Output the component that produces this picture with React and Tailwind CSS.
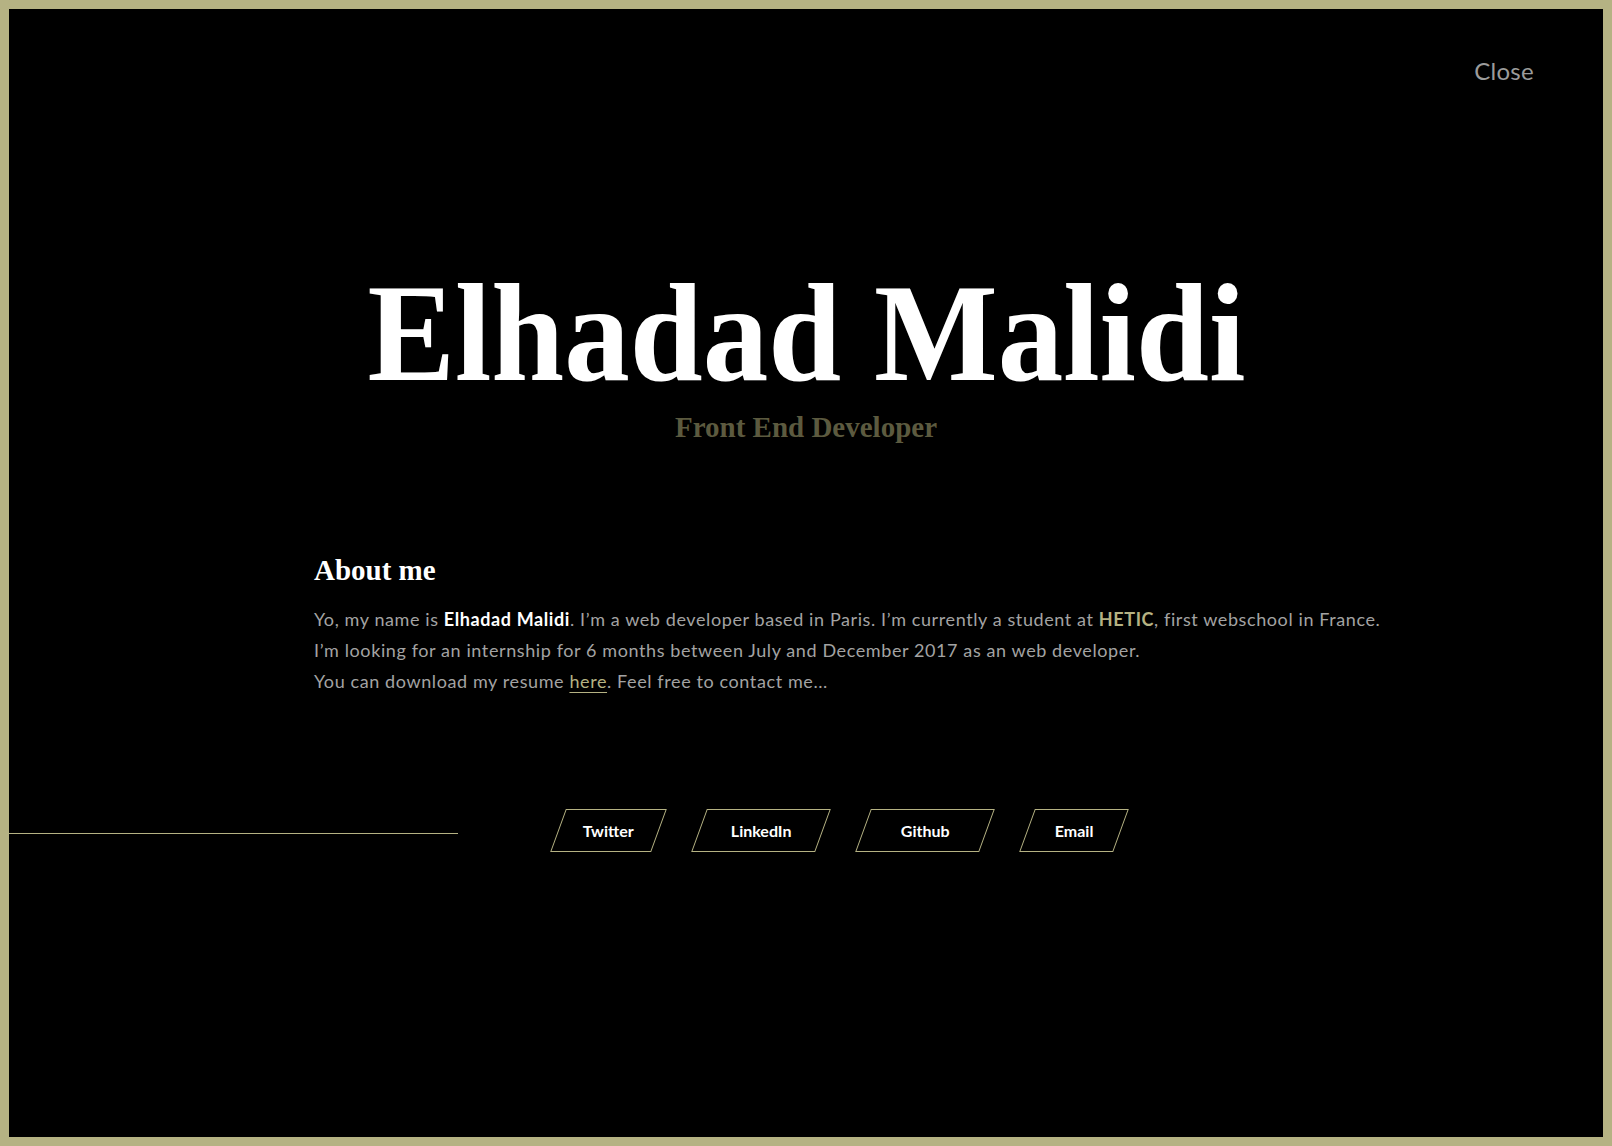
export default function App() {
  const links = [
    { label: "Twitter", width: "w-[101px]" },
    { label: "LinkedIn", width: "w-[124px]" },
    { label: "Github", width: "w-[124px]" },
    { label: "Email", width: "w-[94px]" },
  ];

  return (
    <div className="h-[1146px] w-full overflow-hidden border-[9px] border-[#b5b283] bg-black flex flex-col">
      {/* top bar */}
      <div className="flex justify-end pr-[69px] pt-[50px]">
        <button className="font-['Lato',sans-serif] text-[24px] leading-none tracking-[0.3px] text-[#9b9b9b]">
          Close
        </button>
      </div>

      {/* hero */}
      <div className="mt-[181px] flex flex-col items-center">
        <h1 className="scale-x-[0.943] font-['Liberation_Serif',serif] font-bold text-[139px] leading-none text-white">
          Elhadad Malidi
        </h1>
        <p className="mt-[10px] font-['Liberation_Serif',serif] font-bold text-[29px] leading-none text-[#5c5a3f]">
          Front End Developer
        </p>
      </div>

      {/* about */}
      <div className="mt-[114px] pl-[305px]">
        <h2 className="font-['Liberation_Serif',serif] font-bold text-[29px] leading-none text-white">
          About me
        </h2>
        <p className="mt-[19px] whitespace-nowrap font-['Lato',sans-serif] text-[18px] leading-[31px] tracking-[0.6px] text-[#a3a3a3]">
          Yo, my name is <span className="font-bold text-white">Elhadad Malidi</span>. I’m a web developer based in Paris. I’m currently a student at{" "}
          <span className="font-bold text-[#b5b283]">HETIC</span>, first webschool in France.
          <br />
          I’m looking for an internship for 6 months between July and December 2017 as an web developer.
          <br />
          You can download my resume{" "}
          <a href="#" className="text-[#b5b283] underline underline-offset-4">here</a>. Feel free to contact me...
        </p>
      </div>

      {/* links */}
      <div className="mt-[112px] flex items-start">
        <div className="mt-[24px] h-px w-[449px] bg-[#b5b283]" />
        <div className="ml-[100px] flex gap-[40px]">
          {links.map((link) => (
            <a
              key={link.label}
              href="#"
              className={`${link.width} h-[43px] flex items-center justify-center border border-[#b5b283] skew-x-[-20deg]`}
            >
              <span className="skew-x-[20deg] font-['Lato',sans-serif] font-bold text-[16px] text-white">
                {link.label}
              </span>
            </a>
          ))}
        </div>
      </div>
    </div>
  );
}
